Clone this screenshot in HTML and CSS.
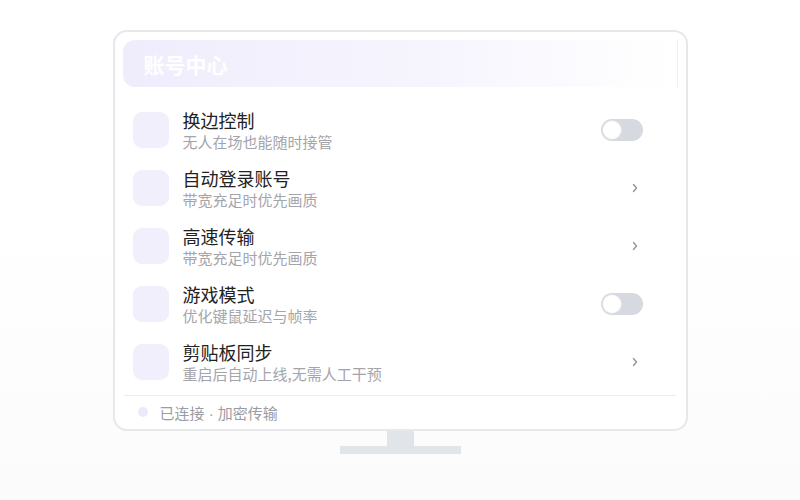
FILE: index.html
```html
<!DOCTYPE html>
<html>
  <head>
    <title>账号中心</title>
    <link rel="stylesheet" href="styles.css">
  </head>
  <body>
    <div class="monitor">
      <div class="screen">
        <div class="screen-header">
          <div class="screen-title">账号中心</div>
        </div>
        <ul class="settings-list">
          <li class="setting-item">
            <div class="setting-icon"></div>
            <div class="setting-text">
              <div class="setting-title">换边控制</div>
              <div class="setting-desc">无人在场也能随时接管</div>
            </div>
            <div class="toggle"><span class="toggle-knob"></span></div>
          </li>
          <li class="setting-item">
            <div class="setting-icon"></div>
            <div class="setting-text">
              <div class="setting-title">自动登录账号</div>
              <div class="setting-desc">带宽充足时优先画质</div>
            </div>
            <svg class="chevron" width="8" height="12" viewBox="0 0 8 12">
              <polyline points="2.5,2.5 5.5,6 2.5,9.5" fill="none" stroke="#8c919b" stroke-width="1.3" stroke-linecap="round" stroke-linejoin="round"/>
            </svg>
          </li>
          <li class="setting-item">
            <div class="setting-icon"></div>
            <div class="setting-text">
              <div class="setting-title">高速传输</div>
              <div class="setting-desc">带宽充足时优先画质</div>
            </div>
            <svg class="chevron" width="8" height="12" viewBox="0 0 8 12">
              <polyline points="2.5,2.5 5.5,6 2.5,9.5" fill="none" stroke="#8c919b" stroke-width="1.3" stroke-linecap="round" stroke-linejoin="round"/>
            </svg>
          </li>
          <li class="setting-item">
            <div class="setting-icon"></div>
            <div class="setting-text">
              <div class="setting-title">游戏模式</div>
              <div class="setting-desc">优化键鼠延迟与帧率</div>
            </div>
            <div class="toggle"><span class="toggle-knob"></span></div>
          </li>
          <li class="setting-item">
            <div class="setting-icon"></div>
            <div class="setting-text">
              <div class="setting-title">剪贴板同步</div>
              <div class="setting-desc">重启后自动上线,无需人工干预</div>
            </div>
            <svg class="chevron" width="8" height="12" viewBox="0 0 8 12">
              <polyline points="2.5,2.5 5.5,6 2.5,9.5" fill="none" stroke="#8c919b" stroke-width="1.3" stroke-linecap="round" stroke-linejoin="round"/>
            </svg>
          </li>
        </ul>
        <div class="screen-footer">
          <span class="status-dot"></span>
          <span class="status-text">已连接<span class="status-sep"> · </span>加密传输</span>
        </div>
      </div>
      <div class="stand-neck"></div>
      <div class="stand-base"></div>
    </div>
  </body>
</html>
```

FILE: styles.css
```css
* {
  margin: 0;
  padding: 0;
  box-sizing: border-box;
}

body {
  font-family: "Noto Sans CJK SC", "Noto Sans", sans-serif;
  height: 100vh;
  background: linear-gradient(180deg, #ffffff 0%, #ffffff 45%, #fbfbfc 100%);
  color: #1f1f1f;
  display: flex;
  justify-content: center;
  padding-top: 30px;
}

.monitor {
  display: flex;
  flex-direction: column;
  align-items: center;
}

.screen {
  width: 575px;
  height: 401px;
  background-color: #ffffff;
  border: 2px solid #e6e8ec;
  border-radius: 14px;
  padding: 8px 8px 0 8px;
  display: flex;
  flex-direction: column;
}

.screen-header {
  height: 47px;
  border-radius: 12px 0 0 12px;
  background: linear-gradient(90deg, #efedfc 0%, #f6f5fe 55%, #ffffff 100%);
  border-right: 1px solid #eef0f3;
  display: flex;
  align-items: center;
  padding-left: 21px;
}

.screen-title {
  color: #ffffff;
  font-size: 21px;
  font-weight: 700;
}

.settings-list {
  list-style: none;
  margin-top: 14px;
  padding: 0 10px 0 10px;
}

.setting-item {
  height: 58px;
  display: flex;
  align-items: center;
}

.setting-icon {
  width: 36px;
  height: 36px;
  border-radius: 9px;
  background-color: #f1effc;
  flex-shrink: 0;
}

.setting-text {
  flex: 1;
  margin-left: 14px;
  display: flex;
  flex-direction: column;
}

.setting-title {
  font-size: 18px;
  line-height: 22px;
  color: #222222;
}

.setting-desc {
  margin-top: 1px;
  font-size: 15px;
  line-height: 19px;
  color: #a4a5ab;
}

.toggle {
  width: 42px;
  height: 22px;
  border-radius: 11px;
  background-color: #d6d9df;
  margin-right: 25px;
  display: flex;
  align-items: center;
  padding-left: 2px;
}

.toggle-knob {
  width: 18px;
  height: 18px;
  border-radius: 50%;
  background-color: #ffffff;
  box-shadow: 0 0 0 1px #e2e4e8;
}

.chevron {
  margin-right: 29px;
}

.screen-footer {
  margin-top: 4px;
  border-top: 1px solid #eceef1;
  height: 33px;
  display: flex;
  align-items: center;
  padding-left: 14px;
  margin-left: 1px;
  margin-right: 2px;
}

.status-dot {
  width: 10px;
  height: 10px;
  border-radius: 50%;
  background-color: #ece9fb;
}

.status-text {
  margin-left: 12px;
  font-size: 15px;
  color: #9a9ca4;
}

.status-sep {
  font-family: "Liberation Sans", sans-serif;
}

.stand-neck {
  width: 27px;
  height: 15px;
  background-color: #e1e4e8;
}

.stand-base {
  width: 121px;
  height: 8px;
  background-color: #e1e4e8;
}
```
